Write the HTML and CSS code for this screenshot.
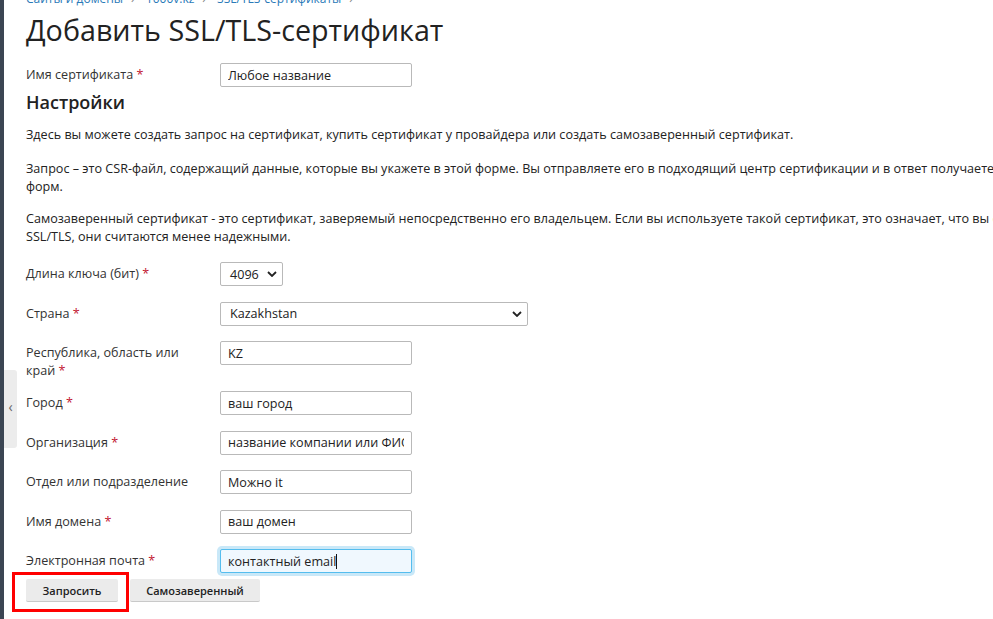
FILE: index.html
```html
<!DOCTYPE html>
<html lang="ru">
<head>
<meta charset="utf-8">
<title>Добавить SSL/TLS-сертификат</title>
<link rel="stylesheet" href="styles.css">
</head>
<body>
<div class="app">
  <aside class="rail"></aside>
  <div class="rail-toggle"><span class="chev">‹</span></div>
  <main class="content">
    <nav class="crumbs">
      <a href="#">Сайты и домены</a><span class="sep">›</span>
      <a href="#">1000v.kz</a><span class="sep">›</span>
      <a href="#">SSL/TLS-сертификаты</a><span class="sep">›</span>
    </nav>
    <h1 class="title">Добавить SSL/TLS-сертификат</h1>

    <div class="row row-name">
      <label class="lbl">Имя сертификата <span class="req">*</span></label>
      <input class="field" type="text" value="Любое название">
    </div>

    <h2 class="section">Настройки</h2>
    <p class="hint">Здесь вы можете создать запрос на сертификат, купить сертификат у провайдера или создать самозаверенный сертификат.</p>
    <p class="hint">Запрос – это CSR-файл, содержащий данные, которые вы укажете в этой форме. Вы отправляете его в подходящий центр сертификации и в ответ получаете сертификат, который затем загружаете с помощью этой<br>форм.</p>
    <p class="hint">Самозаверенный сертификат - это сертификат, заверяемый непосредственно его владельцем. Если вы используете такой сертификат, это означает, что вы сами удостоверяете свою подлинность. Самозаверенные сертификаты поддерживают<br>SSL/TLS, они считаются менее надежными.</p>

    <div class="form">
      <div class="row">
        <label class="lbl">Длина ключа (бит) <span class="req">*</span></label>
        <div class="select sel-short"><span>4096</span><svg class="caret" viewBox="0 0 10 6" width="10" height="6"><path d="M1 1l4 4 4-4" fill="none" stroke="#222" stroke-width="1.8"/></svg></div>
      </div>
      <div class="row">
        <label class="lbl">Страна <span class="req">*</span></label>
        <div class="select sel-long"><span>Kazakhstan</span><svg class="caret" viewBox="0 0 10 6" width="10" height="6"><path d="M1 1l4 4 4-4" fill="none" stroke="#222" stroke-width="1.8"/></svg></div>
      </div>
      <div class="row row-tall">
        <label class="lbl">Республика, область или<br>край <span class="req">*</span></label>
        <input class="field" type="text" value="KZ">
      </div>
      <div class="row">
        <label class="lbl">Город <span class="req">*</span></label>
        <input class="field" type="text" value="ваш город">
      </div>
      <div class="row">
        <label class="lbl">Организация <span class="req">*</span></label>
        <input class="field" type="text" value="название компании или ФИО">
      </div>
      <div class="row">
        <label class="lbl">Отдел или подразделение</label>
        <input class="field" type="text" value="Можно it">
      </div>
      <div class="row">
        <label class="lbl">Имя домена <span class="req">*</span></label>
        <input class="field" type="text" value="ваш домен">
      </div>
      <div class="row row-last">
        <label class="lbl">Электронная почта <span class="req">*</span></label>
        <div class="field field-focus"><span>контактный email</span><span class="cursor"></span></div>
      </div>
    </div>

    <div class="actions">
      <div class="btn-wrap">
        <button class="btn" type="button">Запросить</button>
        <span class="highlight"></span>
      </div>
      <button class="btn btn-wide" type="button">Самозаверенный</button>
    </div>
  </main>
</div>
</body>
</html>
```
FILE: styles.css
```css
* { box-sizing: border-box; }
html, body { margin: 0; padding: 0; }
body {
  background: #fff;
  color: #222;
  font-family: "Open Sans", "Noto Sans", sans-serif;
  font-size: 12.6px;
  overflow: hidden;
}
.app {
  display: flex;
  min-height: 619px;
  position: relative;
}
.rail {
  width: 4px;
  flex: none;
  background: #3b4553;
}
.rail-toggle {
  position: absolute;
  left: 4px;
  top: 370px;
  width: 13px;
  height: 78px;
  background: #ececec;
  border-radius: 0 3px 3px 0;
  display: flex;
  align-items: center;
  justify-content: center;
}
.chev {
  color: #666;
  font-size: 14px;
  line-height: 1;
  margin-top: -4px;
}
.content {
  flex: 1;
  padding-left: 22px;
  white-space: nowrap;
  overflow: hidden;
}
.crumbs {
  margin-top: -9px;
  height: 16px;
  line-height: 16px;
  font-size: 12px;
}
.crumbs a {
  color: #2a7ab8;
  text-decoration: none;
}
.crumbs .sep {
  color: #888;
  margin: 0 8px;
}
.title {
  margin: 5px 0 0;
  font-size: 28.7px;
  font-weight: 400;
  line-height: 36px;
  color: #222;
}
.row {
  display: flex;
  align-items: flex-start;
  margin-bottom: 15.5px;
}
.row-name {
  margin-top: 15px;
  margin-bottom: 4px;
}
.lbl {
  width: 194px;
  flex: none;
  padding-top: 3px;
  line-height: 18px;
  color: #333;
}
.req { color: #c21631; }
.row-tall { margin-bottom: 11px; }
.field {
  width: 192px;
  height: 24px;
  border: 1px solid #b9b9b9;
  border-radius: 2px;
  padding: 0 7px;
  font: 12.6px "Open Sans", "Noto Sans", sans-serif;
  color: #222;
  background: #fff;
  outline: none;
  display: flex;
  align-items: center;
  overflow: hidden;
}
.field-focus {
  border-color: #55bdee;
  background: #f0f8fe;
  box-shadow: 0 0 0 3px #c9e8f8;
}
.cursor {
  display: inline-block;
  width: 1px;
  height: 15px;
  background: #111;
}
.select {
  height: 24px;
  border: 1px solid #b9b9b9;
  border-radius: 2px;
  padding: 0 5px 0 9px;
  display: flex;
  align-items: center;
  justify-content: space-between;
  background: #fff;
  color: #222;
}
.sel-short { width: 63px; }
.sel-long { width: 308px; }
.caret { flex: none; }
.section {
  margin: 0;
  font-size: 18px;
  font-weight: 600;
  line-height: 22px;
  color: #222;
}
.hint {
  margin: 13px 0 16px;
  line-height: 18px;
  color: #222;
}
.hint + .hint { margin-top: 0; }
.hint + .hint + .hint { margin-top: -2px; }
.form { margin-top: 13px; }
.row-last { margin-bottom: 6px; }
.actions {
  display: flex;
  gap: 12px;
}
.btn-wrap { position: relative; }
.btn {
  height: 23px;
  border: 0;
  border-bottom: 1px solid #c9c9c9;
  background: #ebebeb;
  border-radius: 2px;
  font: 600 11px "Open Sans", "Noto Sans", sans-serif;
  color: #222;
  padding: 0;
  width: 92px;
}
.btn-wide { width: 130px; }
.highlight {
  position: absolute;
  left: -14px;
  top: -7px;
  right: -11px;
  bottom: -10px;
  border: 3px solid #f00;
}
```
